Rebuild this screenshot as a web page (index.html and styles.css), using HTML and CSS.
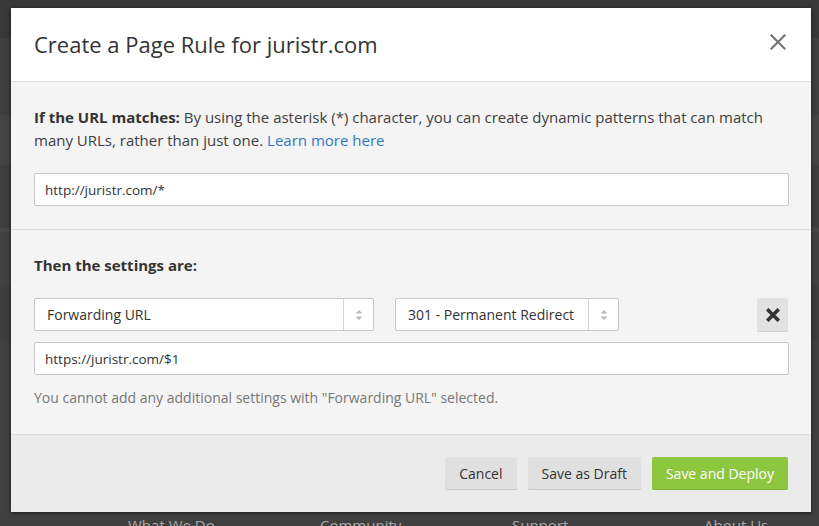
FILE: index.html
```html
<!DOCTYPE html>
<html lang="en">
<head>
<meta charset="utf-8">
<title>Create a Page Rule</title>
<link rel="stylesheet" href="styles.css">
</head>
<body>
<div class="overlay">
  <div class="modal">
    <header class="modal-head">
      <h1 class="title">Create a Page Rule for juristr.com</h1>
      <button class="close" aria-label="Close">
        <svg width="16" height="16" viewBox="0 0 16 16"><path d="M1.5 1.5 L14.5 14.5 M14.5 1.5 L1.5 14.5" stroke="#777" stroke-width="2.2" stroke-linecap="square" fill="none"/></svg>
      </button>
    </header>
    <section class="sec sec-match">
      <p class="lead"><strong>If the URL matches:</strong> By using the asterisk (*) character, you can create dynamic patterns that can match many URLs, rather than just one. <a class="link" href="#">Learn more here</a></p>
      <div class="input">http://juristr.com/*</div>
    </section>
    <section class="sec sec-settings">
      <h2 class="subhead">Then the settings are:</h2>
      <div class="row">
        <div class="select s1">
          <span class="select-val">Forwarding URL</span>
          <span class="arrows"><svg width="8" height="12" viewBox="0 0 8 12"><path d="M4 1 L7.5 4.5 L0.5 4.5 Z M4 11 L7.5 7.5 L0.5 7.5 Z" fill="#bbb"/></svg></span>
        </div>
        <div class="select s2">
          <span class="select-val">301 - Permanent Redirect</span>
          <span class="arrows"><svg width="8" height="12" viewBox="0 0 8 12"><path d="M4 1 L7.5 4.5 L0.5 4.5 Z M4 11 L7.5 7.5 L0.5 7.5 Z" fill="#bbb"/></svg></span>
        </div>
        <button class="remove" aria-label="Remove">
          <svg width="14" height="14" viewBox="0 0 14 14"><path d="M2.5 2.5 L11.5 11.5 M11.5 2.5 L2.5 11.5" stroke="#333" stroke-width="3.6" stroke-linecap="square" fill="none"/></svg>
        </button>
      </div>
      <div class="input input-url">https://juristr.com/$1</div>
      <p class="help">You cannot add any additional settings with "Forwarding URL" selected.</p>
    </section>
    <footer class="modal-foot">
      <button class="btn">Cancel</button>
      <button class="btn">Save as Draft</button>
      <button class="btn btn-primary">Save and Deploy</button>
    </footer>
  </div>
  <nav class="bg-links">
    <span>What We Do</span>
    <span>Community</span>
    <span>Support</span>
    <span>About Us</span>
  </nav>
</div>
</body>
</html>
```
FILE: styles.css
```css
* { box-sizing: border-box; }
html, body { margin: 0; padding: 0; }
body {
  width: 819px;
  height: 526px;
  overflow: hidden;
  font-family: "Open Sans", "Liberation Sans", sans-serif;
  color: #333;
  background:
    linear-gradient(to bottom,
      #383838 0px, #383838 38px,
      #3f3f3f 38px, #3f3f3f 115px,
      #444 115px, #444 165px,
      #3e3e3e 165px, #3e3e3e 228px,
      #474747 228px, #474747 232px,
      #414141 232px, #414141 285px,
      #3d3d3d 285px, #3d3d3d 340px,
      #404040 340px);
}
.overlay {
  display: flex;
  flex-direction: column;
  padding: 8px 0 0 11px;
}
.modal {
  width: 800px;
  height: 504px;
  background: #fff;
  display: flex;
  flex-direction: column;
  box-shadow: 0 1px 4px rgba(0,0,0,0.6);
}
.modal-head {
  height: 74px;
  flex: none;
  display: flex;
  align-items: center;
  justify-content: space-between;
  padding: 0 25px 6px 23px;
  border-bottom: 1px solid #e0e0e0;
}
.title {
  margin: 5px 0 0;
  font-weight: 400;
  font-size: 22px;
  line-height: 30px;
  color: #333;
}
.close {
  border: 0;
  background: none;
  padding: 0;
  width: 16px;
  height: 16px;
  display: flex;
}
.sec {
  background: #f4f4f4;
  padding: 0 22px 0 23px;
}
.sec-match {
  height: 148px;
  flex: none;
  padding-top: 24px;
  border-bottom: 1px solid #ddd;
}
.lead {
  margin: 0;
  font-size: 15px;
  line-height: 23px;
  color: #404040;
}
.lead strong { color: #333; font-weight: 700; }
.link { color: #2f7bbf; text-decoration: none; }
.input {
  margin-top: 21px;
  height: 33px;
  border: 1px solid #c8c8c8;
  border-radius: 2px;
  background: #fff;
  display: flex;
  align-items: center;
  padding-left: 10px;
  font-size: 13.5px;
  color: #333;
}
.sec-settings {
  flex: 1;
  padding-top: 24px;
}
.subhead {
  margin: 0;
  font-size: 15px;
  line-height: 23px;
  font-weight: 700;
  color: #333;
}
.row {
  margin-top: 21px;
  display: flex;
  align-items: center;
  gap: 21px;
}
.select {
  height: 33px;
  border: 1px solid #c8c8c8;
  border-radius: 2px;
  background: #fff;
  display: flex;
  align-items: stretch;
}
.s1 { width: 340px; }
.s2 { width: 224px; }
.select-val {
  flex: 1;
  display: flex;
  align-items: center;
  padding-left: 12px;
  font-size: 14px;
  color: #333;
}
.arrows {
  width: 30px;
  flex: none;
  border-left: 1px solid #d6d6d6;
  display: flex;
  align-items: center;
  justify-content: center;
}
.remove {
  margin-left: auto;
  margin-right: 1px;
  width: 31px;
  height: 33px;
  border: 0;
  border-radius: 2px;
  background: #e2e2e2;
  box-shadow: 0 1px 0 #cfcfcf;
  display: flex;
  align-items: center;
  justify-content: center;
  padding: 0;
}
.input-url { margin-top: 11px; }
.help {
  margin: 11px 0 0;
  font-size: 14px;
  line-height: 23px;
  color: #777;
}
.modal-foot {
  height: 78px;
  flex: none;
  background: #ebebeb;
  border-top: 1px solid #ddd;
  display: flex;
  justify-content: flex-end;
  align-items: flex-start;
  gap: 11px;
  padding: 22px 23px 0 0;
}
.btn {
  height: 32px;
  border: 0;
  border-radius: 2px;
  background: #e0e0e0;
  box-shadow: 0 1px 0 #c8c8c8;
  font-family: "Open Sans", "Liberation Sans", sans-serif;
  font-size: 14px;
  color: #333;
  padding: 0 14px;
}
.btn-primary {
  background: #8dc63f;
  box-shadow: 0 1px 0 #7fb338;
  color: #fff;
}
.bg-links {
  display: flex;
  width: 800px;
  padding-left: 117px;
  margin-top: 3px;
  font-size: 15px;
  color: #a8a8a8;
  overflow: hidden;
}
.bg-links span { flex: none; width: 192px; }
.bg-links span:last-child { width: auto; }
```
